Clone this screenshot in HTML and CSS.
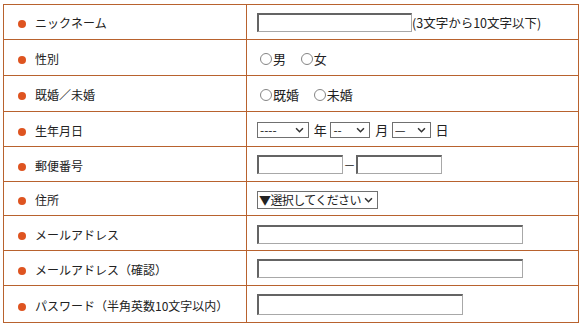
FILE: index.html
```html
<!DOCTYPE html>
<html lang="ja">
<head>
  <meta charset="UTF-8" />
  <title>会員登録</title>
  <link rel="stylesheet" href="styles.css">
</head>
<body>

  <table class="entry">
    <tr>
      <th><span class="dot"></span>ニックネーム</th>
      <td><input type="text" class="txt w-nick"><span class="note">(3文字から10文字以下)</span></td>
    </tr>
    <tr>
      <th><span class="dot"></span>性別</th>
      <td>
        <label class="radio"><span class="circle"></span>男</label>
        <label class="radio"><span class="circle"></span>女</label>
      </td>
    </tr>
    <tr>
      <th><span class="dot"></span>既婚／未婚</th>
      <td>
        <label class="radio"><span class="circle"></span>既婚</label>
        <label class="radio"><span class="circle"></span>未婚</label>
      </td>
    </tr>
    <tr>
      <th><span class="dot"></span>生年月日</th>
      <td>
        <span class="sel w-year"><select><option>----</option></select><svg viewBox="0 0 10 7"><path d="M1 1.5 L5 5.5 L9 1.5" /></svg></span>
        <span class="unit">年</span>
        <span class="sel w-month"><select><option>--</option></select><svg viewBox="0 0 10 7"><path d="M1 1.5 L5 5.5 L9 1.5" /></svg></span>
        <span class="unit">月</span>
        <span class="sel w-day"><select><option>—</option></select><svg viewBox="0 0 10 7"><path d="M1 1.5 L5 5.5 L9 1.5" /></svg></span>
        <span class="unit">日</span>
      </td>
    </tr>
    <tr>
      <th><span class="dot"></span>郵便番号</th>
      <td><input type="text" class="txt w-zip"><span class="dash">－</span><input type="text" class="txt w-zip"></td>
    </tr>
    <tr>
      <th><span class="dot"></span>住所</th>
      <td>
        <span class="sel w-pref"><select><option>▼選択してください</option></select><svg viewBox="0 0 10 7"><path d="M1 1.5 L5 5.5 L9 1.5" /></svg></span>
      </td>
    </tr>
    <tr>
      <th><span class="dot"></span>メールアドレス</th>
      <td><input type="text" class="txt w-mail"></td>
    </tr>
    <tr>
      <th><span class="dot"></span>メールアドレス（確認）</th>
      <td><input type="text" class="txt w-mail"></td>
    </tr>
    <tr>
      <th><span class="dot"></span>パスワード（半角英数10文字以内）</th>
      <td><input type="password" class="txt w-pass"></td>
    </tr>
  </table>

</body>
</html>
```

FILE: styles.css
```css
body {
  margin: 0;
  padding: 4px 0 0 3px;
  background: #fff;
  color: #222;
  font-family: "Noto Sans CJK JP", "Liberation Sans", sans-serif;
  font-size: 12px;
}

.entry {
  border-collapse: collapse;
  width: 576px;
  height: 319px;
}

.entry th,
.entry td {
  border: 1px solid #b8622e;
  padding: 0;
  vertical-align: middle;
}

.entry th {
  width: 228px;
  text-align: left;
  font-weight: normal;
  padding-left: 14px;
  padding-top: 2px;
  white-space: nowrap;
}

.entry td {
  padding-left: 10px;
  white-space: nowrap;
}

.dot {
  display: inline-block;
  width: 8px;
  height: 8px;
  border-radius: 50%;
  background: #de5420;
  margin-right: 9px;
  vertical-align: 0;
}

.txt {
  box-sizing: border-box;
  height: 19px;
  margin: 0;
  padding: 0 2px;
  vertical-align: middle;
  background: #fff;
  border-top: 2px solid #646464;
  border-left: 2px solid #646464;
  border-right: 1px solid #a8a8a8;
  border-bottom: 1px solid #a8a8a8;
  outline: none;
}

.w-nick { width: 155px; }
.w-zip { width: 86px; }
.w-mail { width: 266px; height: 19px; }
.w-pass { width: 206px; height: 21px; }

.note {
  vertical-align: middle;
  font-size: 12.5px;
}

.dash {
  display: inline-block;
  width: 13px;
  text-align: center;
  vertical-align: middle;
}

.radio {
  display: inline-flex;
  align-items: center;
  margin-right: 9px;
  padding-top: 2px;
  font-size: 13px;
}

.circle {
  display: inline-block;
  box-sizing: border-box;
  width: 12px;
  height: 12px;
  border-radius: 50%;
  border: 1px solid #858585;
  background: #fff;
  margin: 0 1px 0 3px;
}

.sel {
  position: relative;
  display: inline-block;
  vertical-align: middle;
}

.sel select {
  appearance: none;
  -webkit-appearance: none;
  box-sizing: border-box;
  width: 100%;
  height: 16px;
  margin: 0;
  padding: 0 0 0 2px;
  border: 1px solid #707070;
  border-radius: 0;
  background: #fff;
  color: #222;
  font-family: "Noto Sans CJK JP", "Liberation Sans", sans-serif;
  font-size: 12px;
  line-height: 14px;
  display: block;
}

.sel svg {
  position: absolute;
  right: 5px;
  top: 5px;
  width: 9px;
  height: 6px;
  fill: none;
  stroke: #333;
  stroke-width: 1.8;
  pointer-events: none;
}

.w-year { width: 52px; }
.w-month { width: 40px; }
.w-day { width: 39px; }
.w-pref { width: 121px; }
.w-pref select {
  height: 18px;
  line-height: 16px;
  font-size: 12px;
  letter-spacing: -0.6px;
  padding-left: 1px;
}
.w-pref svg { top: 6px; }

.unit {
  display: inline-block;
  vertical-align: middle;
  margin: 0 1px 0 2px;
  font-size: 13px;
}
```
